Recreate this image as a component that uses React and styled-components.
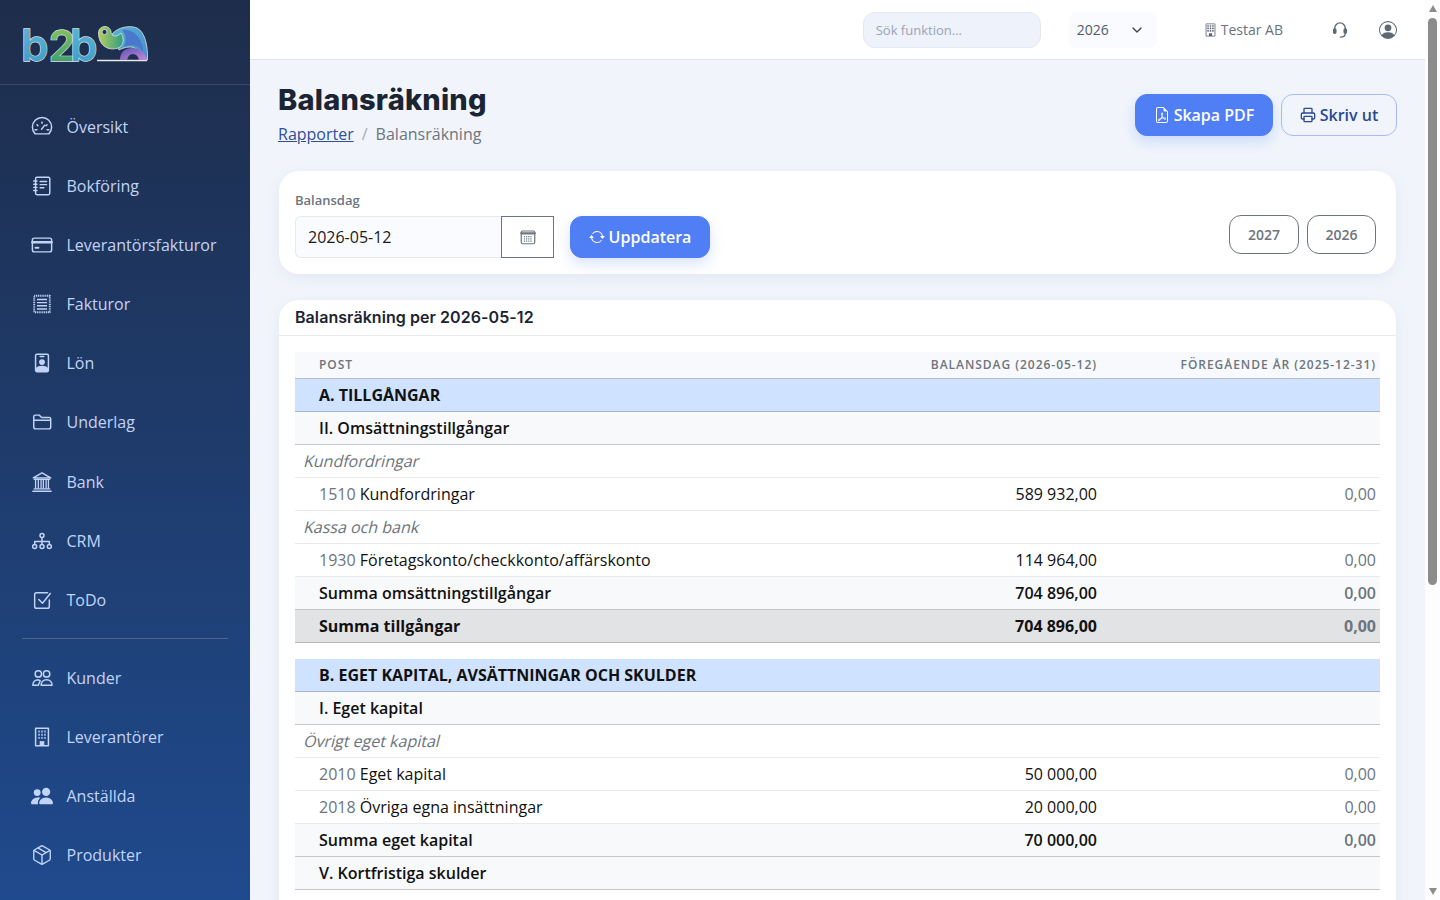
import styled, { createGlobalStyle } from "styled-components";
import { Package, Printer, ChevronDown } from "lucide-react";
import {
  BsArrowRepeat,
  BsBuilding,
  BsFileEarmarkPdf,
  BsPeopleFill,
  BsPersonCircle,
} from "react-icons/bs";

const GlobalStyle = createGlobalStyle`
  html, body { height: 100%; overflow: hidden; }
  body {
    margin: 0;
    background: #f1f5fb;
    font-family: "Open Sans", "Liberation Sans", sans-serif;
    color: #111;
  }
  * { box-sizing: border-box; }
`;

const Shell = styled.div`
  display: flex;
  height: 100vh;
`;

const Sidebar = styled.aside`
  flex: 0 0 250px;
  overflow: hidden;
  background: linear-gradient(180deg, #1e2d4b 0%, #1f4a8d 100%);
`;

const LogoBar = styled.div`
  height: 85px;
  padding: 25px 0 0 20px;
  border-bottom: 1px solid #3a4a65;
`;

const Nav = styled.nav`
  padding-top: 12.25px;
`;

const NavItem = styled.a`
  display: flex;
  align-items: center;
  gap: 13.5px;
  height: 59.125px;
  padding-left: 31px;
  font-size: 16px;
  color: #c2d4f6;
  svg {
    flex: 0 0 22px;
    width: 22px;
    height: 22px;
  }
`;

const NavDivider = styled.hr`
  margin: 8.75px 22px 9px;
  border: 0;
  border-top: 1px solid #4b6594;
`;

const Main = styled.main`
  flex: 1;
  min-width: 0;
  overflow-y: auto;
  scrollbar-width: none;
`;

const ScrollRail = styled.div`
  flex: 0 0 15px;
  display: flex;
  flex-direction: column;
  align-items: center;
  padding: 5px 0;
  background: #fdfdfd;
`;

const ScrollArrow = styled.span`
  width: 0;
  height: 0;
  border-left: 4px solid transparent;
  border-right: 4px solid transparent;
  border-${(p) => (p.$down ? "top" : "bottom")}: 7px solid #8c8c8c;
  margin-top: ${(p) => (p.$down ? "auto" : 0)};
`;

const ScrollThumb = styled.span`
  width: 9px;
  height: 567px;
  margin-top: 6px;
  border-radius: 5px;
  background: #8c8c8c;
`;

const Topbar = styled.header`
  height: 60px;
  background: #fff;
  border-bottom: 1px solid #dfe5ee;
  display: flex;
  align-items: center;
  justify-content: flex-end;
  padding-right: 28px;
`;

const Search = styled.input`
  width: 178px;
  height: 36px;
  padding: 0 12px;
  margin-right: 28px;
  border: 1px solid #e2e7f0;
  border-radius: 12px;
  background: #eef2fa;
  font: 13px "Open Sans", sans-serif;
  &::placeholder { color: #9aa4b8; opacity: 1; }
`;

const YearSelect = styled.div`
  width: 88px;
  height: 36px;
  padding: 0 12px 0 8px;
  margin-right: 47px;
  display: flex;
  align-items: center;
  justify-content: space-between;
  border-radius: 8px;
  background: #f9fbfe;
  font-size: 14px;
  color: #555c66;
  svg { width: 16px; height: 16px; color: #3f444b; }
`;

const Company = styled.div`
  display: flex;
  align-items: center;
  gap: 4px;
  margin-right: 48px;
  font-size: 14px;
  color: #6b7280;
  svg { width: 13px; height: 14px; color: #5c6672; }
`;

const TopIcon = styled.span`
  display: flex;
  margin-right: ${(p) => p.$gap || 0}px;
  color: #5f6873;
  svg { width: 18px; height: 18px; }
`;

const Content = styled.div`
  padding: 23px 28px 28px 28px;
`;

const PageHead = styled.div`
  display: flex;
  justify-content: space-between;
  align-items: flex-start;
  margin-bottom: 25px;
`;

const Title = styled.h1`
  margin: 0;
  font-family: Inter, "Liberation Sans", sans-serif;
  font-size: 29px;
  line-height: 34px;
  font-weight: 800;
  letter-spacing: 0.2px;
  color: #1b2433;
`;

const Breadcrumb = styled.div`
  margin-top: 5px;
  font-size: 16px;
  line-height: 24px;
  color: #6c757d;
  a { color: #2f4f9a; text-decoration: underline; }
  span { margin: 0 8px; color: #a4abb3; }
`;

const HeadActions = styled.div`
  display: flex;
  gap: 8px;
  margin-top: 11px;
`;

const Button = styled.button`
  display: flex;
  align-items: center;
  justify-content: center;
  gap: 4px;
  height: 42px;
  width: ${(p) => p.$width}px;
  padding: 0;
  border-radius: 12px;
  border: 1px solid ${(p) => (p.$outline ? "#a6bbf5" : "#4f7ef5")};
  background: ${(p) => (p.$outline ? "transparent" : "#4f7ef5")};
  color: ${(p) => (p.$outline ? "#2b4a8f" : "#fff")};
  box-shadow: ${(p) => (p.$outline ? "none" : "0 6px 14px rgba(79,126,245,.22)")};
  font: 600 16px "Open Sans", sans-serif;
  svg { width: 16px; height: 16px; }
`;

const Card = styled.section`
  width: 1117px;
  margin-left: 1px;
  background: #fff;
  border-radius: 20px;
  box-shadow: 0 4px 16px rgba(40, 60, 110, 0.07);
`;

const FilterCard = styled(Card)`
  height: 103px;
  padding: 21px 20px 16px 16px;
  display: flex;
  align-items: flex-end;
  margin-bottom: 26px;
`;

const Field = styled.div`
  display: flex;
  flex-direction: column;
`;

const Label = styled.label`
  font-size: 13px;
  line-height: 18px;
  font-weight: 600;
  color: #6c757d;
  margin-bottom: 7px;
`;

const DateGroup = styled.div`
  display: flex;
  height: 42px;
`;

const DateInput = styled.div`
  width: 206px;
  padding-left: 12px;
  display: flex;
  align-items: center;
  border: 1px solid #e6e9f2;
  border-right: 0;
  border-radius: 6px 0 0 6px;
  background: #fafbfe;
  font-size: 16px;
  color: #1a1a1a;
`;

const CalendarButton = styled.div`
  width: 53px;
  display: flex;
  align-items: center;
  justify-content: center;
  border: 1px solid #6c757d;
  color: #6c757d;
  svg { width: 18px; height: 18px; }
`;

const UpdateButton = styled(Button)`
  margin-left: 16px;
`;

const YearButtons = styled.div`
  margin-left: auto;
  display: flex;
  gap: 8px;
  margin-bottom: 4px;
`;

const YearButton = styled.button`
  height: 39px;
  width: ${(p) => p.$width}px;
  padding: 0;
  border: 1px solid #6c757d;
  border-radius: 12px;
  background: transparent;
  color: #6c757d;
  font: 600 14px "Open Sans", sans-serif;
`;

const CardHead = styled.div`
  height: 36px;
  padding: 0 16px 2px;
  display: flex;
  align-items: center;
  border-bottom: 1px solid #e9ecef;
  font-family: Inter, "Liberation Sans", sans-serif;
  font-size: 16px;
  font-weight: 600;
  letter-spacing: 0.07px;
  color: #1b2433;
`;

const CardBody = styled.div`
  padding: 16px;
`;

const Table = styled.table`
  width: 100%;
  border-collapse: separate;
  border-spacing: 0;
  table-layout: fixed;
`;

const HeadCell = styled.th`
  height: 27px;
  padding: 0 4px 2px ${(p) => (p.$first ? 24 : 4)}px;
  text-align: ${(p) => (p.$first ? "left" : "right")};
  background: #f8f9fc;
  border-bottom: 1px solid #b9bec6;
  font-size: 12px;
  font-weight: 600;
  letter-spacing: 0.96px;
  color: #6c757d;
  text-transform: uppercase;
`;

const rowStyles = {
  section: { bg: "#cfe2ff", line: "#a6b5cc", weight: 700 },
  sub: { bg: "#f8f9fa", line: "#c6c7c8", weight: 600 },
  group: { bg: "#fff", line: "#e9ecef", weight: 400 },
  item: { bg: "#fff", line: "#e9ecef", weight: 400 },
  sum: { bg: "#f8f9fa", line: "#c6c7c8", weight: 600 },
  total: { bg: "#e2e3e5", line: "#b5b6b8", weight: 700 },
};

const Cell = styled.td`
  height: 33px;
  padding: 0 4px;
  font-size: 16px;
  line-height: 24px;
  background: ${(p) => rowStyles[p.$kind].bg};
  border-bottom: 1px solid ${(p) => rowStyles[p.$kind].line};
  font-weight: ${(p) => rowStyles[p.$kind].weight};
`;

const NameCell = styled(Cell)`
  padding-left: ${(p) => (p.$kind === "group" ? 8 : 24)}px;
  color: #111;
`;

/* the reference slants the upright face rather than using the true italic */
const GroupName = styled.span`
  display: inline-block;
  transform: skewX(-14deg);
  transform-origin: 0 75%;
  color: #6c757d;
`;

const AmountCell = styled(Cell)`
  text-align: right;
  color: ${(p) => (p.$muted ? "#6c757d" : "#111")};
`;

const AccountNo = styled.span`
  color: #6c757d;
`;

const Spacer = styled.td`
  height: 16px;
  padding: 0;
`;

const icon = {
  width: 22,
  height: 22,
  viewBox: "0 0 24 24",
  fill: "none",
  stroke: "currentColor",
  strokeWidth: 1.6,
  strokeLinecap: "round",
  strokeLinejoin: "round",
};

const GaugeIcon = () => (
  <svg {...icon}>
    <path d="M4.500 19.500a10.500 10.500 0 1 1 15 0z" />
    <path d="M12 6.500v1.500M6.500 9.500l1 1M17.500 9.500l-1 1M4.500 15H6.500M17.500 15h2M11.500 14.500l3.500-4.500" />
  </svg>
);
const BookIcon = () => (
  <svg {...icon}>
    <rect x="5" y="2.500" width="15.500" height="19" rx="1.500" />
    <path d="M3 6.500h3.500M3 10h3.500M3 13.500h3.500M3 17h3.500M10 7h7M10 10.500h7M10 14h4" />
  </svg>
);
const CardIcon = () => (
  <svg {...icon}>
    <rect x="1.500" y="4.500" width="21" height="15" rx="2" />
    <path d="M1.500 9h21" strokeWidth="2.600" />
    <path d="M5 15h3" strokeWidth="2.400" />
  </svg>
);
const InvoiceIcon = () => (
  <svg {...icon}>
    <rect x="3.500" y="3" width="17" height="18" strokeWidth="2" strokeDasharray="1.200 0.800" strokeLinecap="butt" />
    <path d="M6.500 7h11M6.500 10.500h11M6.500 14h11M6.500 17.500h11" strokeWidth="1.600" strokeLinecap="butt" />
  </svg>
);
const BadgeIcon = () => (
  <svg {...icon}>
    <rect x="5" y="2.500" width="14" height="19" rx="1.500" />
    <circle cx="12" cy="11" r="3.200" fill="currentColor" stroke="none" />
    <path d="M5 21v-2.500c1-2.500 3-3.500 7-3.500s6 1 7 3.500V21z" fill="currentColor" stroke="none" />
    <path d="M10 5h4" />
  </svg>
);
const FolderIcon = () => (
  <svg {...icon}>
    <path d="M3 9V6a1.500 1.500 0 0 1 1.500-1.500h4.500l2.500 2.500H20a1.500 1.500 0 0 1 1.500 1.500v9a2 2 0 0 1-2 2H5a2 2 0 0 1-2-2z" />
    <path d="M3 10h18" />
  </svg>
);
const BankIcon = () => (
  <svg {...icon} strokeLinecap="butt">
    <path d="M2.500 7.500 12 2l9.500 5.500z" />
    <path d="M3 9h18M5 9.500v9.500M8 9.500v9.500M11 9.500v9.500M13.500 9.500v9.500M16.500 9.500v9.500M19 9.500v9.500" strokeWidth="1.400" />
    <path d="M3 19.500h18M1.500 22h21" />
  </svg>
);
const CrmIcon = () => (
  <svg {...icon}>
    <circle cx="12" cy="6" r="2.200" />
    <circle cx="4" cy="18" r="2.200" />
    <circle cx="12" cy="18" r="2.200" />
    <circle cx="20" cy="18" r="2.200" />
    <path d="M12 8.200V15.800M4 15.800V12.500h16v3.300" />
  </svg>
);
const CheckIcon = () => (
  <svg {...icon}>
    <path d="M20 12v7a2 2 0 0 1-2 2H6a2 2 0 0 1-2-2V6a2 2 0 0 1 2-2h12" />
    <path d="M8.500 11.500 12.500 15.500 21 5" />
  </svg>
);
const CustomersIcon = () => (
  <svg {...icon}>
    <circle cx="8" cy="7.500" r="3.500" />
    <circle cx="17" cy="7.500" r="3.500" />
    <path d="M2 20c0-3.500 2.500-6 6-6l2 1-2 5zM11 20c0-3.500 2.500-6 6-6s6 2.500 6 6z" />
  </svg>
);
const SupplierIcon = () => (
  <svg {...icon}>
    <rect x="5" y="2.500" width="14" height="19" />
    <path d="M8 6h1.500M11.250 6h1.500M14.500 6H16M8 9.500h1.500M11.250 9.500h1.500M14.500 9.500H16M8 13h1.500M11.250 13h1.500M14.500 13H16" strokeWidth="2" strokeLinecap="butt" />
    <rect x="9.500" y="16.500" width="5" height="5" fill="currentColor" stroke="none" />
  </svg>
);
const CalendarIcon = () => (
  <svg {...icon}>
    <rect x="3" y="4" width="18" height="17" rx="2" />
    <path d="M3 7h18" strokeWidth="3" />
    <path d="M6.500 11.500h11M6.500 14.500h11M6.500 17.500h11" strokeWidth="1.800" strokeDasharray="1.600 1.300" strokeLinecap="butt" />
  </svg>
);
const HeadsetIcon = () => (
  <svg {...icon} strokeWidth="1.800">
    <path d="M5 13V9.500a7 7 0 0 1 14 0V13" />
    <rect x="3.500" y="10.500" width="3" height="6" rx="1.500" fill="currentColor" />
    <rect x="17.500" y="10.500" width="3" height="6" rx="1.500" fill="currentColor" />
    <path d="M19 17c0 3-3 4.500-6.500 4.500" />
  </svg>
);

const Logo = () => (
  <svg width="130" height="40" viewBox="20 25 130 40">
    <defs>
      <linearGradient id="blue" x1="0" y1="0" x2="0" y2="1">
        <stop offset="0" stopColor="#62b8d4" />
        <stop offset="1" stopColor="#3c9ac8" />
      </linearGradient>
      <linearGradient id="green" x1="0" y1="0" x2="0" y2="1">
        <stop offset="0" stopColor="#96c95a" />
        <stop offset="1" stopColor="#2d9a70" />
      </linearGradient>
      <linearGradient id="trunk" x1="0" y1="0" x2="1" y2="0">
        <stop offset="0" stopColor="#b5cf5e" />
        <stop offset="1" stopColor="#2f9c82" />
      </linearGradient>
      <linearGradient id="body" x1="0" y1="0" x2="1" y2="1">
        <stop offset="0" stopColor="#54b6d0" />
        <stop offset="1" stopColor="#4a8ad0" />
      </linearGradient>
      <linearGradient id="leg" x1="0" y1="0" x2="1" y2="1">
        <stop offset="0" stopColor="#5d55b5" />
        <stop offset="1" stopColor="#c48ad6" />
      </linearGradient>
    </defs>
    <g
      fontFamily="Inter, sans-serif"
      fontWeight="600"
      fontSize="44"
      stroke="#dfe3e6"
      strokeWidth="1.300"
      paintOrder="stroke"
    >
      <text x="21" y="60.500" fill="url(#blue)">b</text>
      <text x="48.500" y="60.500" fontSize="43" fill="url(#green)">2</text>
      <text x="70" y="60.500" fill="url(#blue)">b</text>
    </g>
    <path d="M97 60.500h50" stroke="#e6e8ea" strokeWidth="1.400" />
    <path
      d="M112 34C118 27 130 25 137 28 145 32 148 46 147.500 60H141C140 52 136 47 130 47 125 47 121 49 119 50z"
      fill="url(#body)"
      stroke="#dfe3e6"
      strokeWidth="0.800"
    />
    <path d="M122 30C130 28 140 34 143 48V52C138 44 130 44 124 47 127 40 126 34 122 30z" fill="#4a78cc" />
    <path d="M120 60C120 52 125 48 132 48 140 48 146 53 147 60H139C138 56 136 54 133 54 130 54 128 56 127 60z" fill="url(#leg)" />
    <path
      d="M98.500 33C98.500 28.500 102 26.500 105 26.500 109 26.500 111.500 30 111 33 113 37 117 37 121 33 124 38 124 44 120 47 114 51 99 50 98.500 33z"
      fill="url(#trunk)"
      stroke="#dfe3e6"
      strokeWidth="0.800"
    />
    <circle cx="104.500" cy="32" r="2.500" fill="#1e2f4d" stroke="#dfe3e6" strokeWidth="0.800" />
  </svg>
);

const navTop = [
  ["Översikt", <GaugeIcon />],
  ["Bokföring", <BookIcon />],
  ["Leverantörsfakturor", <CardIcon />],
  ["Fakturor", <InvoiceIcon />],
  ["Lön", <BadgeIcon />],
  ["Underlag", <FolderIcon />],
  ["Bank", <BankIcon />],
  ["CRM", <CrmIcon />],
  ["ToDo", <CheckIcon />],
];

const navBottom = [
  ["Kunder", <CustomersIcon />],
  ["Leverantörer", <SupplierIcon />],
  ["Anställda", <BsPeopleFill />],
  ["Produkter", <Package strokeWidth={1.5} />],
];

const rows = [
  ["section", "A. TILLGÅNGAR"],
  ["sub", "II. Omsättningstillgångar"],
  ["group", "Kundfordringar"],
  ["item", "Kundfordringar", "589 932,00", "0,00", "1510"],
  ["group", "Kassa och bank"],
  ["item", "Företagskonto/checkkonto/affärskonto", "114 964,00", "0,00", "1930"],
  ["sum", "Summa omsättningstillgångar", "704 896,00", "0,00"],
  ["total", "Summa tillgångar", "704 896,00", "0,00"],
  ["spacer"],
  ["section", "B. EGET KAPITAL, AVSÄTTNINGAR OCH SKULDER"],
  ["sub", "I. Eget kapital"],
  ["group", "Övrigt eget kapital"],
  ["item", "Eget kapital", "50 000,00", "0,00", "2010"],
  ["item", "Övriga egna insättningar", "20 000,00", "0,00", "2018"],
  ["sum", "Summa eget kapital", "70 000,00", "0,00"],
  ["sub", "V. Kortfristiga skulder"],
  ["item", "Leverantörsskulder", "312 500,00", "0,00", "2440"],
  ["item", "Utgående moms", "140 979,00", "0,00", "2610"],
  ["item", "Ingående moms", "-22 083,00", "0,00", "2640"],
  ["item", "Momsredovisning", "118 500,00", "0,00", "2650"],
  ["item", "Personalskatt", "30 000,00", "0,00", "2710"],
  ["item", "Arbetsgivaravgifter", "25 000,00", "0,00", "2730"],
  ["item", "Upplupna kostnader", "30 000,00", "0,00", "2990"],
  ["sum", "Summa kortfristiga skulder", "634 896,00", "0,00"],
  ["total", "Summa eget kapital och skulder", "704 896,00", "0,00"],
];

const App = () => {
  return (
    <>
      <GlobalStyle />
      <Shell>
        <Sidebar>
          <LogoBar>
            <Logo />
          </LogoBar>
          <Nav>
            {navTop.map(([label, glyph]) => (
              <NavItem key={label}>
                {glyph}
                {label}
              </NavItem>
            ))}
            <NavDivider />
            {navBottom.map(([label, glyph]) => (
              <NavItem key={label}>
                {glyph}
                {label}
              </NavItem>
            ))}
          </Nav>
        </Sidebar>

        <Main>
          <Topbar>
            <Search placeholder="Sök funktion..." />
            <YearSelect>
              2026
              <ChevronDown />
            </YearSelect>
            <Company>
              <BsBuilding />
              Testar AB
            </Company>
            <TopIcon $gap={30}>
              <HeadsetIcon />
            </TopIcon>
            <TopIcon>
              <BsPersonCircle />
            </TopIcon>
          </Topbar>

          <Content>
            <PageHead>
              <div>
                <Title>Balansräkning</Title>
                <Breadcrumb>
                  <a>Rapporter</a>
                  <span>/</span>
                  Balansräkning
                </Breadcrumb>
              </div>
              <HeadActions>
                <Button $width={138}>
                  <BsFileEarmarkPdf />
                  Skapa PDF
                </Button>
                <Button $outline $width={116}>
                  <Printer />
                  Skriv ut
                </Button>
              </HeadActions>
            </PageHead>

            <FilterCard>
              <Field>
                <Label>Balansdag</Label>
                <DateGroup>
                  <DateInput>2026-05-12</DateInput>
                  <CalendarButton>
                    <CalendarIcon />
                  </CalendarButton>
                </DateGroup>
              </Field>
              <UpdateButton $width={140}>
                <BsArrowRepeat />
                Uppdatera
              </UpdateButton>
              <YearButtons>
                <YearButton $width={70}>2027</YearButton>
                <YearButton $width={69}>2026</YearButton>
              </YearButtons>
            </FilterCard>

            <Card>
              <CardHead>Balansräkning per 2026-05-12</CardHead>
              <CardBody>
                <Table>
                  <colgroup>
                    <col />
                    <col width="280" />
                    <col width="279" />
                  </colgroup>
                  <thead>
                    <tr>
                      <HeadCell $first>Post</HeadCell>
                      <HeadCell>Balansdag (2026-05-12)</HeadCell>
                      <HeadCell>Föregående år (2025-12-31)</HeadCell>
                    </tr>
                  </thead>
                  <tbody>
                    {rows.map(([kind, name, amount, previous, account], i) =>
                      kind === "spacer" ? (
                        <tr key={i}>
                          <Spacer colSpan={3} />
                        </tr>
                      ) : (
                        <tr key={i}>
                          <NameCell $kind={kind}>
                            {account && <AccountNo>{account} </AccountNo>}
                            {kind === "group" ? <GroupName>{name}</GroupName> : name}
                          </NameCell>
                          <AmountCell $kind={kind}>{amount}</AmountCell>
                          <AmountCell $kind={kind} $muted>
                            {previous}
                          </AmountCell>
                        </tr>
                      )
                    )}
                  </tbody>
                </Table>
              </CardBody>
            </Card>
          </Content>
        </Main>

        <ScrollRail>
          <ScrollArrow />
          <ScrollThumb />
          <ScrollArrow $down />
        </ScrollRail>
      </Shell>
    </>
  );
};

export default App;
